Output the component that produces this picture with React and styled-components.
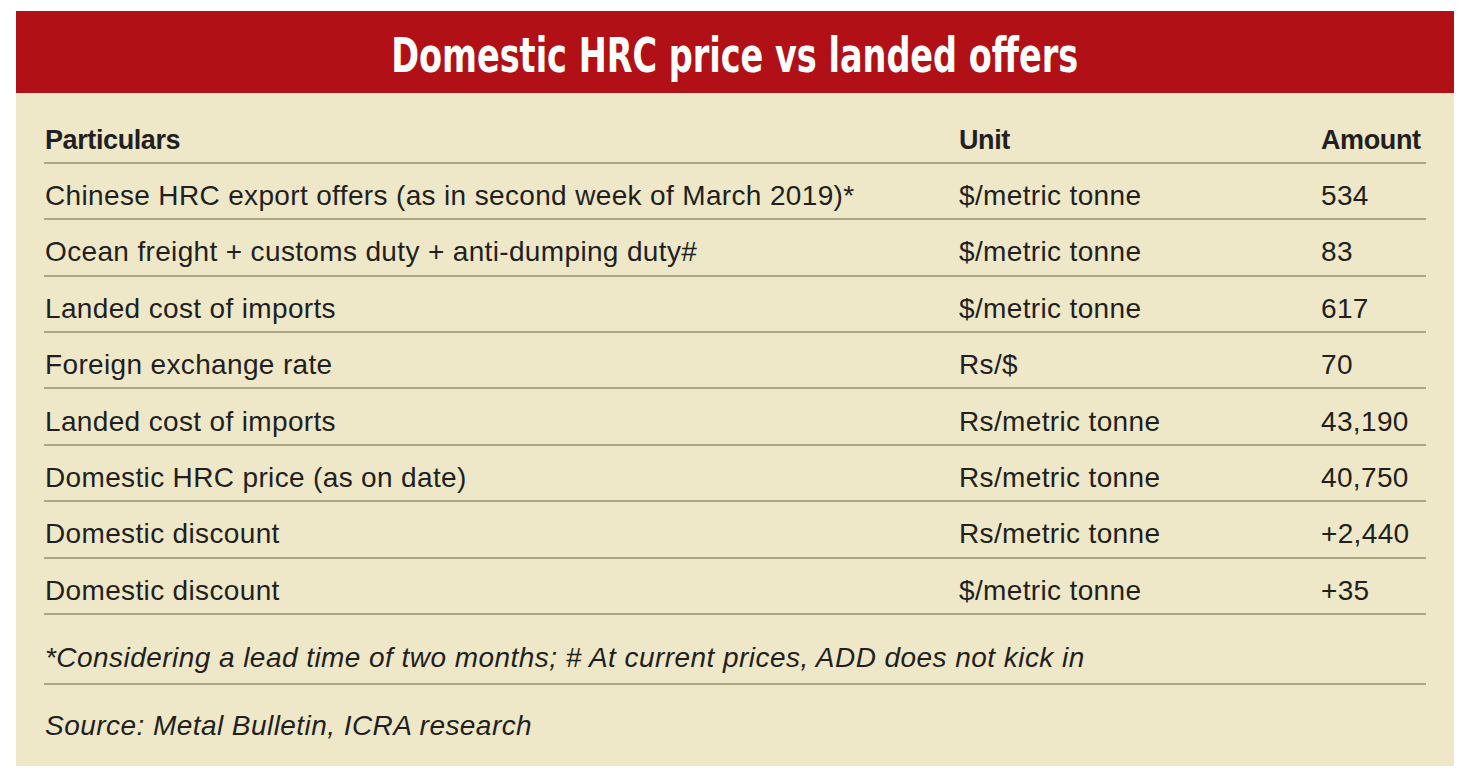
import React from "react";
import styled, { createGlobalStyle } from "styled-components";

const rows = [
    { label: "Chinese HRC export offers (as in second week of March 2019)*", unit: "$/metric tonne", amount: "534" },
    { label: "Ocean freight + customs duty + anti-dumping duty#", unit: "$/metric tonne", amount: "83" },
    { label: "Landed cost of imports", unit: "$/metric tonne", amount: "617" },
    { label: "Foreign exchange rate", unit: "Rs/$", amount: "70" },
    { label: "Landed cost of imports", unit: "Rs/metric tonne", amount: "43,190" },
    { label: "Domestic HRC price (as on date)", unit: "Rs/metric tonne", amount: "40,750" },
    { label: "Domestic discount", unit: "Rs/metric tonne", amount: "+2,440" },
    { label: "Domestic discount", unit: "$/metric tonne", amount: "+35" },
];

const App = () => {
    return <>
        <GlobalStyle />
        <Panel>
            <Title><TitleText>Domestic HRC price vs landed offers</TitleText></Title>
            <Body>
                <Row head>
                    <Cell>Particulars</Cell>
                    <Cell>Unit</Cell>
                    <Cell>Amount</Cell>
                </Row>
                {rows.map((r, i) => (
                    <Row key={i}>
                        <Cell>{r.label}</Cell>
                        <Cell>{r.unit}</Cell>
                        <Cell>{r.amount}</Cell>
                    </Row>
                ))}
                <Note bordered>*Considering a lead time of two months; # At current prices, ADD does not kick in</Note>
                <Note>Source: Metal Bulletin, ICRA research</Note>
            </Body>
        </Panel>
    </>
}

const GlobalStyle = createGlobalStyle`
    body {
        margin: 0;
        background: #ffffff;
        font-family: "Liberation Sans", Arial, sans-serif;
        color: #231f20;
    }
`

const Panel = styled.div`
    margin: 11px 0 0 16px;
    width: 1438px;
    height: 755px;
    background: #eee8c8;
    display: flex;
    flex-direction: column;
`

const Title = styled.h1`
    margin: 0;
    height: 82px;
    padding-top: 6px;
    box-sizing: border-box;
    background: #b11016;
    color: #ffffff;
    display: flex;
    align-items: center;
    justify-content: center;
    font-family: "DejaVu Sans Condensed", "DejaVu Sans", sans-serif;
    font-weight: 700;
    font-size: 48px;
`

// the reference title is set in a narrower face than anything installed
const TitleText = styled.span`
    display: inline-block;
    white-space: nowrap;
    transform: scaleX(0.776);
`

const Body = styled.div`
    padding: 0 28px;
    display: flex;
    flex-direction: column;
`

const Row = styled.div`
    display: grid;
    grid-template-columns: 914px 362px 1fr;
    align-items: center;
    height: ${p => p.head ? "71px" : "56.4px"};
    padding-top: ${p => p.head ? "27px" : "10px"};
    box-sizing: border-box;
    border-bottom: 2px solid #aaa582;
    font-size: ${p => p.head ? "27px" : "28px"};
    font-weight: ${p => p.head ? 700 : 400};
    letter-spacing: ${p => p.head ? "-0.4px" : "0.35px"};
`

const Cell = styled.div`
    padding-left: 1px;
    white-space: nowrap;
`

const Note = styled.div`
    height: ${p => p.bordered ? "70px" : "81px"};
    padding-top: ${p => p.bordered ? "18px" : "1px"};
    padding-left: 1px;
    box-sizing: border-box;
    display: flex;
    align-items: center;
    font-size: 28px;
    font-style: italic;
    letter-spacing: 0.45px;
    white-space: nowrap;
    border-bottom: ${p => p.bordered ? "2px solid #aaa582" : "none"};
`

export default App;
